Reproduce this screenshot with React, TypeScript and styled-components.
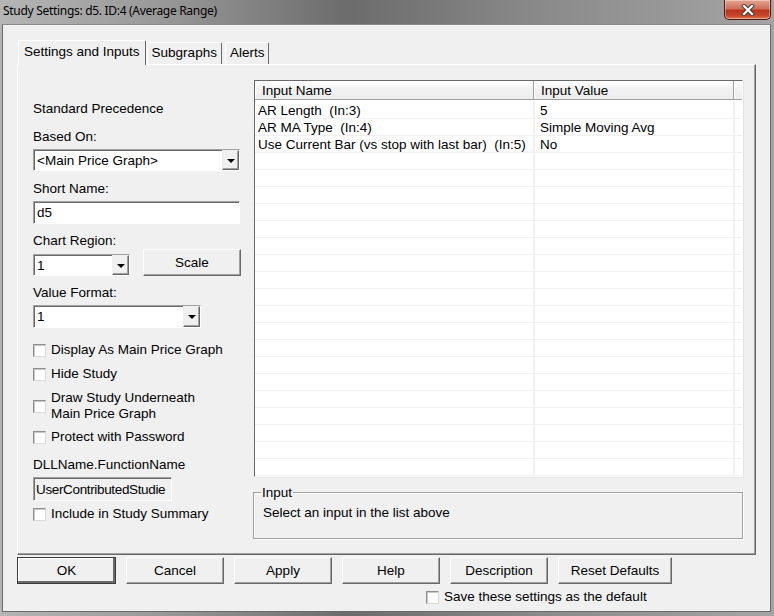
import React from 'react'
import styled, { createGlobalStyle, css } from 'styled-components'

const GlobalStyle = createGlobalStyle`
  html, body {
    margin: 0;
    padding: 0;
    background: #a9a9a9;
  }
  body {
    font-family: 'Liberation Sans', Arial, sans-serif;
    font-size: 13.5px;
    color: #000;
  }
  * {
    box-sizing: border-box;
  }
`

const sunken = css`
  border-style: solid;
  border-width: 1px;
  border-color: #a0a0a0 #ffffff #ffffff #a0a0a0;
  box-shadow: inset 1px 1px 0 #696969;
`

const raised = css`
  border-style: solid;
  border-width: 1px;
  border-color: #ffffff #696969 #696969 #ffffff;
  box-shadow: inset -1px -1px 0 #a0a0a0;
`

const Window = styled.div`
  width: 774px;
  height: 616px;
  display: flex;
  flex-direction: column;
  background: linear-gradient(90deg, #b5b5b5 0%, #9a9a9a 20%, #6c6c6c 45%, #8a8a8a 70%, #a4a4a4 100%);
  padding: 0 3px 4px 2px;
`

const TitleBar = styled.div`
  height: 24px;
  display: flex;
  align-items: flex-start;
  justify-content: space-between;
`

const Title = styled.span`
  font-family: 'Noto Sans', 'Open Sans', sans-serif;
  font-size: 12px;
  line-height: 22px;
  padding-left: 1px;
  letter-spacing: -0.3px;
  color: #000;
`

const CloseButton = styled.div`
  width: 47px;
  height: 20px;
  border: 1px solid #4b1b14;
  border-top: none;
  border-radius: 0 0 5px 5px;
  background: linear-gradient(180deg, #e5a593 0%, #cf6f5a 45%, #b8351c 55%, #c9492c 85%, #e0805c 100%);
  box-shadow: inset 0 0 0 1px rgba(255, 255, 255, 0.35);
  display: flex;
  align-items: center;
  justify-content: center;
`

const Client = styled.div`
  flex: 1;
  background: #f0f0f0;
  border-left: 1px solid #6a6a6a;
  border-right: 1px solid #6a6a6a;
  border-bottom: 1px solid #6a6a6a;
  border-top: 1px solid #8a8a8a;
  padding: 14px 14px 0 14px;
  display: flex;
  flex-direction: column;
`

const TabStrip = styled.div`
  display: flex;
  align-items: flex-end;
  height: 25px;
  padding-left: 1px;
  position: relative;
  z-index: 1;
`

const Tab = styled.div<{ $active?: boolean }>`
  height: ${({ $active }) => ($active ? 25 : 22)}px;
  padding: 0 ${({ $active }) => ($active ? 5 : 4)}px;
  margin-right: ${({ $active }) => ($active ? 0 : 2)}px;
  margin-left: ${({ $active }) => ($active ? 0 : 1)}px;
  background: #f0f0f0;
  border: 1px solid;
  border-color: #ffffff #696969 transparent #ffffff;
  border-bottom: none;
  border-radius: 2px 2px 0 0;
  line-height: ${({ $active }) => ($active ? 21 : 20)}px;
  margin-bottom: ${({ $active }) => ($active ? -1 : 0)}px;
  white-space: nowrap;
`

const TabPanel = styled.div`
  height: 491px;
  border: 1px solid;
  border-color: #ffffff #696969 #696969 #ffffff;
  box-shadow: inset -1px -1px 0 #a0a0a0;
  padding: 15px 14px 0 15px;
  display: flex;
  gap: 13px;
`

const LeftColumn = styled.div`
  width: 208px;
  display: flex;
  flex-direction: column;
`

const Label = styled.div<{ $top: number }>`
  margin-top: ${({ $top }) => $top}px;
  line-height: 16px;
  height: 16px;
  white-space: nowrap;
`

const Field = styled.div<{ $width: number; $height: number; $top?: number; $readOnly?: boolean }>`
  ${sunken};
  width: ${({ $width }) => $width}px;
  height: ${({ $height }) => $height}px;
  margin-top: ${({ $top }) => $top ?? 4}px;
  background: ${({ $readOnly }) => ($readOnly ? '#f0f0f0' : '#ffffff')};
  display: flex;
  align-items: center;
  padding-left: ${({ $readOnly }) => ($readOnly ? 2 : 3)}px;
  overflow: hidden;
  white-space: nowrap;
  flex-shrink: 0;
  letter-spacing: ${({ $readOnly }) => ($readOnly ? '-0.35px' : 'normal')};
`

const FieldText = styled.span`
  flex: 1;
  overflow: hidden;
`

const DropButton = styled.div`
  ${raised};
  background: #f0f0f0;
  width: 17px;
  height: 100%;
  display: flex;
  align-items: center;
  justify-content: center;
  border-top-color: #f0f0f0;
  border-left-color: #f0f0f0;
`

const Arrow = styled.span`
  width: 0;
  height: 0;
  border-left: 4px solid transparent;
  border-right: 4px solid transparent;
  border-top: 4px solid #000;
  margin-top: 1px;
`

const RegionRow = styled.div`
  display: flex;
  align-items: flex-end;
  gap: 13px;
`

const Button = styled.div<{ $width: number; $height: number; $default?: boolean }>`
  ${raised};
  width: ${({ $width }) => $width}px;
  height: ${({ $height }) => $height}px;
  background: #f0f0f0;
  display: flex;
  align-items: center;
  justify-content: center;
  white-space: nowrap;
  flex-shrink: 0;
  ${({ $default }) =>
    $default &&
    css`
      outline: 1px solid #3c3c3c;
      outline-offset: -1px;
      box-shadow: inset -2px -2px 0 #696969, inset 1px 1px 0 #ffffff;
    `}
`

const CheckRow = styled.div<{ $top: number }>`
  display: flex;
  align-items: center;
  gap: 5px;
  margin-top: ${({ $top }) => $top}px;
  line-height: 16px;
  white-space: nowrap;
`

const Box = styled.span`
  width: 13px;
  height: 13px;
  flex-shrink: 0;
  background: #fff;
  border: 1px solid;
  border-color: #8e8f8f #d9d9d9 #d9d9d9 #8e8f8f;
  box-shadow: inset 1px 1px 0 #c8c8c8;
`

const RightColumn = styled.div`
  flex: 1;
  display: flex;
  flex-direction: column;
`

const Grid = styled.div`
  height: 397px;
  border: 1px solid;
  border-color: #696969 #ffffff #ffffff #696969;
  box-shadow: 1px 1px 0 #e3e3e3;
  background: #ffffff;
  overflow: hidden;
`

const HeaderRow = styled.div`
  display: flex;
  height: 19px;
  background: linear-gradient(180deg, #ffffff 0%, #f3f3f3 40%, #ececec 100%);
  border-bottom: 1px solid #a0a0a0;
  margin-bottom: 2px;
`

const HeaderCell = styled.div<{ $width: number }>`
  width: ${({ $width }) => $width}px;
  flex-shrink: 0;
  padding: 2px 0 0 6px;
  line-height: 16px;
  border-right: 1px solid #a0a0a0;
  border-left: 1px solid #ffffff;
  white-space: nowrap;
  &:last-child {
    border-right: none;
    flex: 1;
  }
`

const Row = styled.div`
  display: flex;
  height: 17px;
  border-bottom: 1px solid #f0f0f0;
`

const Cell = styled.div<{ $width: number; $pad: number }>`
  width: ${({ $width }) => $width}px;
  flex-shrink: 0;
  padding-left: ${({ $pad }) => $pad}px;
  line-height: 17px;
  border-right: 2px solid #f0f0f0;
  white-space: pre;
  overflow: hidden;
  &:last-child {
    border-right: none;
    flex: 1;
  }
`

const GroupBox = styled.fieldset`
  margin: 8px 0 0 -1px;
  padding: 5px 8px 0 9px;
  height: 54px;
  border: 1px solid #a0a0a0;
  box-shadow: 1px 1px 0 #ffffff, inset 1px 1px 0 #ffffff;
`

const Legend = styled.legend`
  padding: 0 1px;
  margin-left: -2px;
  line-height: 15px;
`

const ButtonRow = styled.div`
  display: flex;
  gap: 10px;
  margin-top: 2px;
`

const SaveRow = styled.div`
  display: flex;
  align-items: center;
  gap: 5px;
  margin-top: 5px;
  margin-left: 409px;
  line-height: 16px;
`

const rows: [string, string][] = [
  ['AR Length  (In:3)', '5'],
  ['AR MA Type  (In:4)', 'Simple Moving Avg'],
  ['Use Current Bar (vs stop with last bar)  (In:5)', 'No'],
]

const emptyRows = Array.from({ length: 21 })

const buttons: [string, number][] = [
  ['OK', 99],
  ['Cancel', 98],
  ['Apply', 98],
  ['Help', 98],
  ['Description', 98],
  ['Reset Defaults', 114],
]

function Select({ width, height, value, top }: { width: number; height: number; value: string; top?: number }) {
  return (
    <Field $width={width} $height={height} $top={top} style={{ paddingRight: 0 }}>
      <FieldText>{value}</FieldText>
      <DropButton>
        <Arrow />
      </DropButton>
    </Field>
  )
}

function Check({ top, children }: { top: number; children: React.ReactNode }) {
  return (
    <CheckRow $top={top}>
      <Box />
      <span>{children}</span>
    </CheckRow>
  )
}

export default function App() {
  return (
    <>
      <GlobalStyle />
      <Window>
        <TitleBar>
          <Title>Study Settings: d5. ID:4 (Average Range)</Title>
          <CloseButton>
            <svg width="14" height="12" viewBox="0 0 14 12">
              <path d="M3 2 L11 10 M11 2 L3 10" stroke="#3a3a3a" strokeWidth="4" strokeLinecap="square" />
              <path d="M3 2 L11 10 M11 2 L3 10" stroke="#ffffff" strokeWidth="2.2" strokeLinecap="square" />
            </svg>
          </CloseButton>
        </TitleBar>
        <Client>
          <TabStrip>
            <Tab $active>Settings and Inputs</Tab>
            <Tab>Subgraphs</Tab>
            <Tab>Alerts</Tab>
          </TabStrip>
          <TabPanel>
            <LeftColumn>
              <Label $top={21}>Standard Precedence</Label>
              <Label $top={12}>Based On:</Label>
              <Select width={207} height={22} value="<Main Price Graph>" />
              <Label $top={10}>Short Name:</Label>
              <Field $width={207} $height={23}>
                <FieldText>d5</FieldText>
              </Field>
              <Label $top={9}>Chart Region:</Label>
              <RegionRow>
                <Select width={97} height={22} value="1" top={0} />
                <Button $width={98} $height={27}>Scale</Button>
              </RegionRow>
              <Label $top={9}>Value Format:</Label>
              <Select width={168} height={23} value="1" />
              <Check top={14}>Display As Main Price Graph</Check>
              <Check top={8}>Hide Study</Check>
              <Check top={8}>
                Draw Study Underneath
                <br />
                Main Price Graph
              </Check>
              <Check top={7}>Protect with Password</Check>
              <Label $top={12}>DLLName.FunctionName</Label>
              <Field $width={139} $height={24} $readOnly>
                <FieldText>UserContributedStudie</FieldText>
              </Field>
              <Check top={5}>Include in Study Summary</Check>
            </LeftColumn>
            <RightColumn>
              <Grid>
                <HeaderRow>
                  <HeaderCell $width={279}>Input Name</HeaderCell>
                  <HeaderCell $width={200}>Input Value</HeaderCell>
                  <HeaderCell $width={8} />
                </HeaderRow>
                {rows.map(([name, value]) => (
                  <Row key={name}>
                    <Cell $width={280} $pad={3}>{name}</Cell>
                    <Cell $width={200} $pad={5}>{value}</Cell>
                    <Cell $width={6} $pad={0} />
                  </Row>
                ))}
                {emptyRows.map((_, i) => (
                  <Row key={i}>
                    <Cell $width={280} $pad={3} />
                    <Cell $width={200} $pad={5} />
                    <Cell $width={6} $pad={0} />
                  </Row>
                ))}
              </Grid>
              <GroupBox>
                <Legend>Input</Legend>
                Select an input in the list above
              </GroupBox>
            </RightColumn>
          </TabPanel>
          <ButtonRow>
            {buttons.map(([text, width]) => (
              <Button key={text} $width={width} $height={27} $default={text === 'OK'}>
                {text}
              </Button>
            ))}
          </ButtonRow>
          <SaveRow>
            <Box />
            <span>Save these settings as the default</span>
          </SaveRow>
        </Client>
      </Window>
    </>
  )
}
